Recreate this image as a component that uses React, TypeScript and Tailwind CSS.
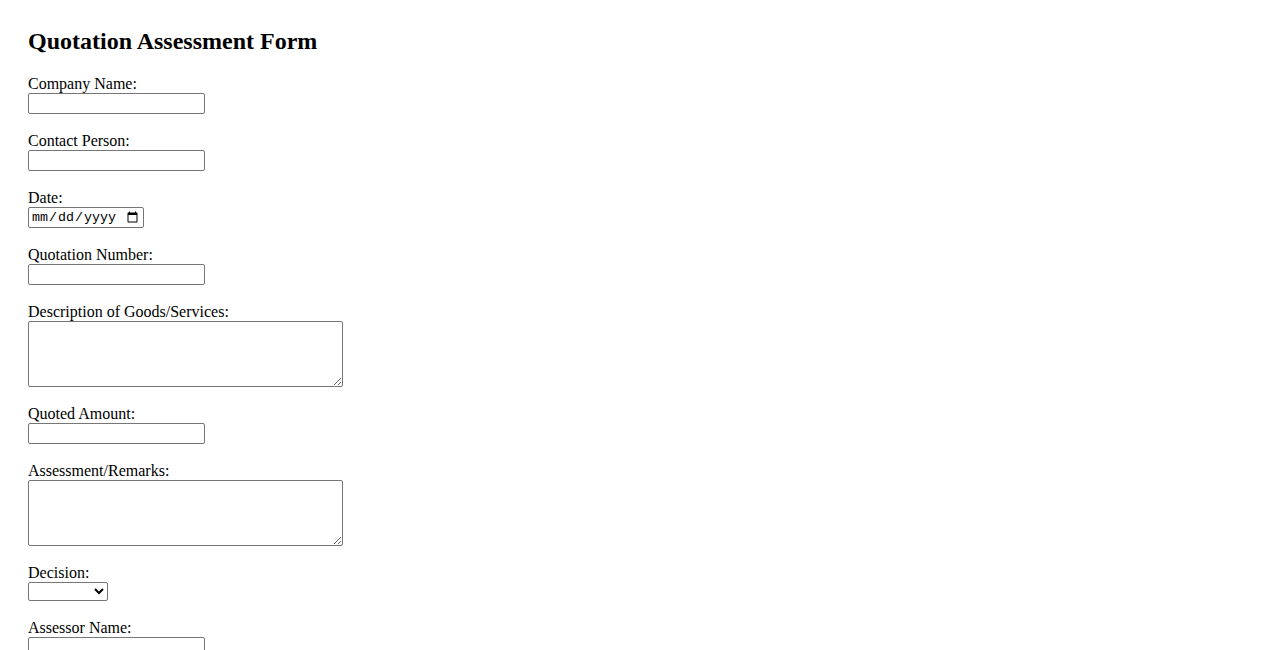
import React from "react";

const serif = "font-['Liberation_Serif','Times_New_Roman',serif]";

const boxBase =
  "block border border-[#767676] rounded-[2px] bg-white text-[13.33px] text-black";

const Field = ({ label, children }: { label: string; children: React.ReactNode }) => (
  <div className="mb-[19px]">
    <label className="block leading-[15px] pb-[2px] text-[16px]">{label}</label>
    {children}
  </div>
);

const TextInput = () => (
  <input type="text" className={`${boxBase} w-[177px] h-[21px] px-[2px] font-['Liberation_Sans',Arial,sans-serif]`} />
);

const TextArea = () => (
  <textarea className={`${boxBase} w-[315px] h-[66px] px-[2px] font-['Liberation_Mono',monospace]`} />
);

export default function App() {
  return (
    <div className={`${serif} text-black bg-white min-h-screen px-[28px] pt-[27px]`}>
      <h2 className="text-[24px] font-bold leading-[28px] mb-[21px]">Quotation Assessment Form</h2>
      <form>
        <Field label="Company Name:">
          <TextInput />
        </Field>
        <Field label="Contact Person:">
          <TextInput />
        </Field>
        <Field label="Date:">
          <input
            type="date"
            className={`${boxBase} w-[116px] h-[21px] px-[2px] font-['Liberation_Mono',monospace]`}
          />
        </Field>
        <Field label="Quotation Number:">
          <TextInput />
        </Field>
        <Field label="Description of Goods/Services:">
          <TextArea />
        </Field>
        <Field label="Quoted Amount:">
          <TextInput />
        </Field>
        <Field label="Assessment/Remarks:">
          <TextArea />
        </Field>
        <Field label="Decision:">
          <select className={`${boxBase} w-[80px] h-[19px] font-['Liberation_Sans',Arial,sans-serif]`} defaultValue="">
            <option value=""></option>
            <option value="approve">Approve</option>
            <option value="reject">Reject</option>
          </select>
        </Field>
        <Field label="Assessor Name:">
          <TextInput />
        </Field>
      </form>
    </div>
  );
}
